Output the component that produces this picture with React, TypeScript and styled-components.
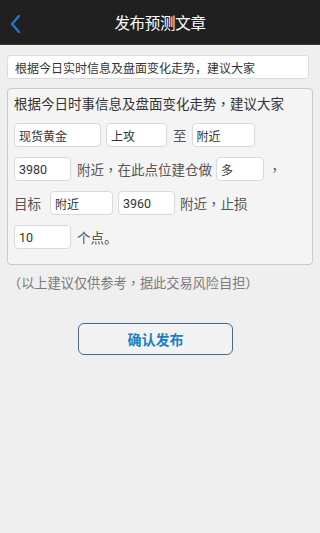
import React from 'react';
import styled, { createGlobalStyle } from 'styled-components';

const GlobalStyle = createGlobalStyle`
  html, body {
    margin: 0;
    padding: 0;
    background: #efefef;
    font-family: Roboto, "Noto Sans CJK SC", sans-serif;
  }
  * {
    box-sizing: border-box;
  }
`;

const Page = styled.div`
  width: 320px;
  min-height: 533px;
  background: #efefef;
`;

const Header = styled.header`
  position: relative;
  height: 45px;
  background: #202020;
  border-bottom: 1px solid #3a3a3a;
  display: flex;
  align-items: center;
  justify-content: center;
`;

const BackButton = styled.button`
  position: absolute;
  left: 6px;
  top: 13px;
  width: 18px;
  height: 22px;
  padding: 0;
  border: none;
  background: none;
  display: flex;
  align-items: center;
  justify-content: center;
`;

const Title = styled.h1`
  margin: 0;
  color: #ffffff;
  font-size: 15.5px;
  font-weight: 400;
  letter-spacing: -0.3px;
`;

const Content = styled.main`
  padding: 10px 8px 0 7px;
`;

const Field = styled.input<{ $w: number; $size?: number }>`
  width: ${({ $w }) => $w}px;
  height: 24px;
  padding: 0 0 0 4px;
  border: 1px solid #d9d9d9;
  border-radius: 4px;
  background: #ffffff;
  color: #333333;
  font-family: Roboto, "Noto Sans CJK SC", sans-serif;
  font-size: ${({ $size }) => $size ?? 12}px;
  outline: none;
  flex: none;
`;

const TopField = styled(Field)`
  display: block;
  padding-left: 7px;
  border-radius: 3px;
  border-color: #dcdcdc;
`;

const Card = styled.section`
  margin-top: 9px;
  width: 306px;
  padding: 4px 6px 15px 6px;
  border: 1px solid #c9c9c9;
  border-radius: 4px;
  background: #f4f4f4;
`;

const CardTitle = styled.div`
  font-size: 13.5px;
  line-height: 20px;
  color: #333333;
  margin-bottom: 9px;
`;

const Row = styled.div`
  display: flex;
  align-items: center;
  height: 24px;
  margin-bottom: 10px;

  &:last-child {
    margin-bottom: 0;
  }
`;

const Word = styled.span<{ $l?: number; $r?: number }>`
  font-size: 13.5px;
  color: #555555;
  margin-left: ${({ $l }) => $l ?? 0}px;
  margin-right: ${({ $r }) => $r ?? 0}px;
  white-space: nowrap;
`;

/* centred full-width punctuation, as the reference's phone font draws it */
const Punct = styled.span`
  font-family: "Noto Sans CJK TC", sans-serif;
`;

const Gap = styled.span<{ $w: number }>`
  display: inline-block;
  width: ${({ $w }) => $w}px;
  flex: none;
`;

const Note = styled.p`
  margin: 9px 0 0 1px;
  font-size: 13.2px;
  color: #7a7a7a;
  line-height: 18px;
`;

const ButtonRow = styled.div`
  display: flex;
  justify-content: center;
  margin-top: 30px;
  padding-right: 8px;
`;

const SubmitButton = styled.button`
  width: 155px;
  height: 32px;
  border: 1px solid #48698a;
  border-radius: 6px;
  background: #f3f3f3;
  color: #1b7fc2;
  font-family: Roboto, "Noto Sans CJK SC", sans-serif;
  font-size: 14px;
  font-weight: 700;
  cursor: pointer;
`;

const App: React.FC = () => {
  return (
    <Page>
      <GlobalStyle />
      <Header>
        <BackButton aria-label="返回">
          <svg width="12" height="20" viewBox="0 0 12 20">
            <path d="M10 2 L3 10 L10 18" fill="none" stroke="#2376cc" strokeWidth="2.4" strokeLinecap="round" strokeLinejoin="round" />
          </svg>
        </BackButton>
        <Title>发布预测文章</Title>
      </Header>
      <Content>
        <TopField $w={302} readOnly value="根据今日实时信息及盘面变化走势，建议大家" />
        <Card>
          <CardTitle>
            根据今日时事信息及盘面变化走势<Punct>，</Punct>建议大家
          </CardTitle>
          <Row>
            <Field $w={87} readOnly value="现货黄金" />
            <Gap $w={5} />
            <Field $w={61} readOnly value="上攻" />
            <Word $l={6} $r={5}>至</Word>
            <Field $w={63} readOnly value="附近" />
          </Row>
          <Row>
            <Field $w={57} readOnly value="3980" $size={12.5} />
            <Word $l={6} $r={4}>
              附近<Punct>，</Punct>在此点位建仓做
            </Word>
            <Field $w={48} readOnly value="多" />
            <Word $l={4}>
              <Punct>，</Punct>
            </Word>
          </Row>
          <Row>
            <Word $r={9}>目标</Word>
            <Field $w={63} readOnly value="附近" />
            <Gap $w={5} />
            <Field $w={57} readOnly value="3960" $size={12.5} />
            <Word $l={5}>
              附近<Punct>，</Punct>止损
            </Word>
          </Row>
          <Row>
            <Field $w={57} readOnly value="10" $size={12.5} />
            <Word $l={6}>个点。</Word>
          </Row>
        </Card>
        <Note>
          （以上建议仅供参考<Punct>，</Punct>据此交易风险自担）
        </Note>
        <ButtonRow>
          <SubmitButton>确认发布</SubmitButton>
        </ButtonRow>
      </Content>
    </Page>
  );
};

export default App;
